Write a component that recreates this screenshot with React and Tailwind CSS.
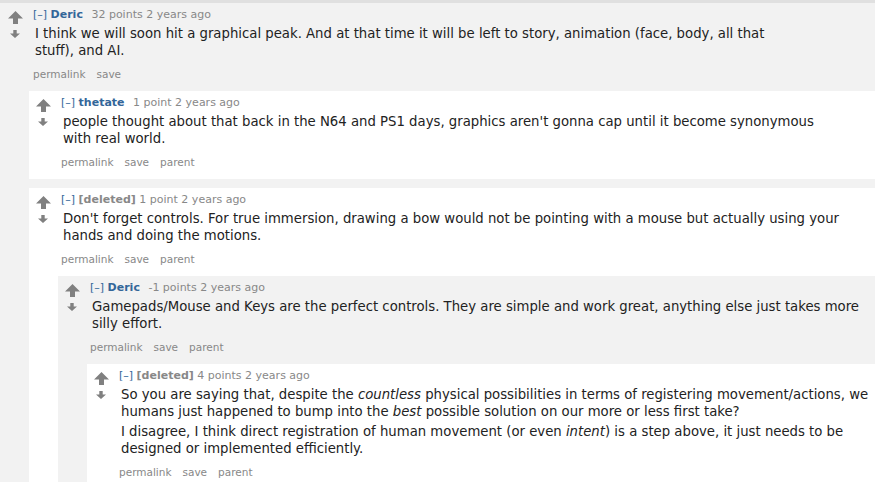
import React from "react";

const UpArrow = () => (
  <svg width="15" height="13" viewBox="0 0 15 13" className="block">
    <path d="M7.5 0 L15 7.5 L10 7.5 L10 13 L5 13 L5 7.5 L0 7.5 Z" fill="#808080" />
  </svg>
);

const DownArrow = () => (
  <svg width="10" height="8" viewBox="0 0 10 8" className="block">
    <path d="M3.3 0 L6.7 0 L6.7 3.5 L10 3.5 L5 8 L0 3.5 L3.3 3.5 Z" fill="#808080" />
  </svg>
);

const Comment = ({ author, deleted, score, gray, top, first, children, actions = ["permalink", "save", "parent"], body }) => {
  return (
    <div className={`${gray ? "bg-[#f2f2f2]" : "bg-white"} ${first ? "" : "mt-[9px]"}`}>
      <div className={`flex ${top ? "pl-[7px]" : "pl-[6px]"} pt-[5px]`}>
        <div className="w-[16px] mr-[10px] flex flex-col items-center pt-[3px]">
          <UpArrow />
          <div className="mt-[6px]">
            <DownArrow />
          </div>
        </div>
        <div className="flex-1 min-w-0">
          <div className="text-[11px] leading-[13px] text-[#888] whitespace-nowrap">
            <span className="text-[#369]">[–]</span>{" "}
            {deleted ? (
              <span className="font-bold text-[#888]">[deleted]</span>
            ) : (
              <span className="font-bold text-[#369] mr-[5px]">{author}</span>
            )}{" "}
            <span>{score} 2 years ago</span>
          </div>
          <div
            className={`mt-[4px] ${top ? "max-w-[765px]" : "max-w-[782px]"} pl-[2px] text-[13.25px] leading-[17px] text-[#222] flex flex-col gap-[3px]`}
          >
            {body}
          </div>
          <div className="mt-[9px] mb-[11px] text-[10.5px] leading-[12px] text-[#888] flex gap-[11px]">
            {actions.map((a) => (
              <span key={a}>{a}</span>
            ))}
          </div>
        </div>
      </div>
      {children && <div className="ml-[29px]">{children}</div>}
    </div>
  );
};

export default function App() {
  return (
    <div
      className="w-[875px] h-[482px] overflow-hidden bg-white"
      style={{ fontFamily: '"DejaVu Sans", Verdana, sans-serif' }}
    >
      <div className="h-[3px] bg-[#e0e0e0]" />
      <Comment
        top
        first
        gray
        author="Deric"
        score="32 points"
        actions={["permalink", "save"]}
        body={
          <p>
            I think we will soon hit a graphical peak. And at that time it will be left to story, animation (face, body, all that
            stuff), and AI.
          </p>
        }
      >
        <Comment
          first
          author="thetate"
          score="1 point"
          body={
            <p>
              people thought about that back in the N64 and PS1 days, graphics aren't gonna cap until it become synonymous with
              real world.
            </p>
          }
        />
        <Comment
          deleted
          score="1 point"
          body={
            <p>
              Don't forget controls. For true immersion, drawing a bow would not be pointing with a mouse but actually using your
              hands and doing the motions.
            </p>
          }
        >
          <Comment
            first
            gray
            author="Deric"
            score="-1 points"
            body={
              <p>
                Gamepads/Mouse and Keys are the perfect controls. They are simple and work great, anything else just takes more
                silly effort.
              </p>
            }
          >
            <Comment
              first
              deleted
              score="4 points"
              body={
                <>
                  <p>
                    So you are saying that, despite the <em>countless</em> physical possibilities in terms of registering
                    movement/actions, we humans just happened to bump into the <em>best</em> possible solution on our more or
                    less first take?
                  </p>
                  <p>
                    I disagree, I think direct registration of human movement (or even <em>intent</em>) is a step above, it just
                    needs to be designed or implemented efficiently.
                  </p>
                </>
              }
            />
          </Comment>
        </Comment>
      </Comment>
    </div>
  );
}
